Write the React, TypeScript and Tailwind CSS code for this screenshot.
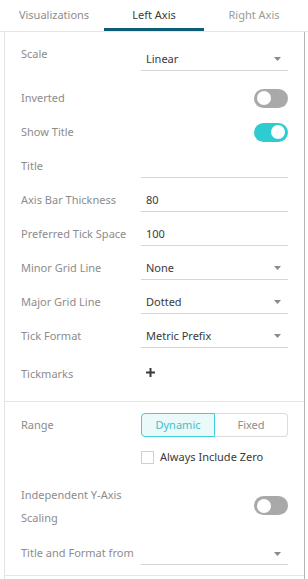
import React from "react";

const font = { fontFamily: '"Noto Sans", "Open Sans", sans-serif' };

function Caret() {
  return (
    <svg width="7" height="4" viewBox="0 0 7 4" className="mr-[7px]">
      <path d="M0 0 H7 L3.5 4 Z" fill="#8a8a8a" />
    </svg>
  );
}

function Toggle({ on }: { on: boolean }) {
  return (
    <div
      className={`w-[34px] h-[19px] rounded-full flex items-center px-[3px] ${
        on ? "bg-[#2ecbd1] justify-end" : "bg-[#a9a9a9] justify-start"
      }`}
    >
      <div className="w-[14px] h-[14px] rounded-full bg-white" />
    </div>
  );
}

function Label({ children, className = "" }: { children: React.ReactNode; className?: string }) {
  return <div className={`w-[120px] text-[#8c8c8c] text-[11px] ${className}`}>{children}</div>;
}

function Field({ value, select }: { value?: string; select?: boolean }) {
  return (
    <div className="w-[147px] h-[23px] border-b border-[#d6d6d6] flex items-center justify-between pl-[5px] pt-[1px] text-[11px] text-[#3a3a3a]">
      <span>{value}</span>
      {select && <Caret />}
    </div>
  );
}

function Row({ label, children }: { label: string; children?: React.ReactNode }) {
  return (
    <div className="h-[34px] flex items-center pl-[16px]">
      <Label>{label}</Label>
      {children}
    </div>
  );
}

export default function App() {
  return (
    <div className="w-[308px] h-[579px] bg-white overflow-hidden" style={font}>
      {/* Tabs */}
      <div className="h-[32px] border-b border-[#e6e6e6]">
        <div className="ml-[4px] w-[300px] h-full flex text-[11px]">
          <div className="w-[100px] flex items-center justify-center text-[#8c8c8c]">Visualizations</div>
          <div className="w-[100px] flex items-center justify-center text-[#3a3a3a] border-b-[3px] border-[#0e5d78] pt-[3px]">
            Left Axis
          </div>
          <div className="w-[100px] flex items-center justify-center text-[#9a9a9a]">Right Axis</div>
        </div>
      </div>

      <div className="ml-[4px] w-[301px] h-[547px] border-l border-[#e4e4e4] border-r border-r-[#b5b5b5]">
        <div className="pt-[10px]">
          <div className="h-[34px] flex items-center pl-[16px]">
            <Label className="pb-[10px]">Scale</Label>
            <Field value="Linear" select />
          </div>
          <div className="h-[5px]" />
          <Row label="Inverted">
            <div className="w-[147px] flex justify-end">
              <Toggle on={false} />
            </div>
          </Row>
          <Row label="Show Title">
            <div className="w-[147px] flex justify-end">
              <Toggle on />
            </div>
          </Row>
          <Row label="Title">
            <Field />
          </Row>
          <Row label="Axis Bar Thickness">
            <Field value="80" />
          </Row>
          <Row label="Preferred Tick Space">
            <Field value="100" />
          </Row>
          <Row label="Minor Grid Line">
            <Field value="None" select />
          </Row>
          <Row label="Major Grid Line">
            <Field value="Dotted" select />
          </Row>
          <Row label="Tick Format">
            <Field value="Metric Prefix" select />
          </Row>
          <div className="h-[42px] flex items-center pl-[16px]">
            <Label>Tickmarks</Label>
            <svg width="9" height="9" viewBox="0 0 9 9" className="ml-[5px] -mt-[4px]">
              <path d="M4.5 0 V9 M0 4.5 H9" stroke="#3a3a3a" strokeWidth="2" />
            </svg>
          </div>
        </div>

        <div className="mt-[6px] border-t border-[#e6e6e6] pt-[11px]">
          <div className="h-[24px] flex items-center pl-[16px]">
            <Label>Range</Label>
            <div className="w-[147px] h-[24px] flex text-[11px]">
              <div className="w-[74px] flex items-center justify-center rounded-l-[4px] border border-[#3fd0d6] bg-[#eaf9fa] text-[#40c2ca]">
                Dynamic
              </div>
              <div className="flex-1 flex items-center justify-center rounded-r-[4px] border border-l-0 border-[#dcdcdc] text-[#8c8c8c]">
                Fixed
              </div>
            </div>
          </div>
          <div className="mt-[12px] flex items-center pl-[136px] text-[11px] text-[#3a3a3a]">
            <div className="w-[13px] h-[13px] border border-[#cfcfcf] bg-white" />
            <span className="ml-[6px]">Always Include Zero</span>
          </div>

          <div className="mt-[17px] mb-[8px] flex items-center pl-[16px]">
            <Label className="leading-[23px]">
              Independent Y-Axis
              <br />
              Scaling
            </Label>
            <div className="w-[147px] flex justify-end">
              <Toggle on={false} />
            </div>
          </div>
          <Row label="Title and Format from">
            <Field select />
          </Row>
          <div className="mt-[4px] border-t border-[#e6e6e6]" />
        </div>
      </div>
    </div>
  );
}
